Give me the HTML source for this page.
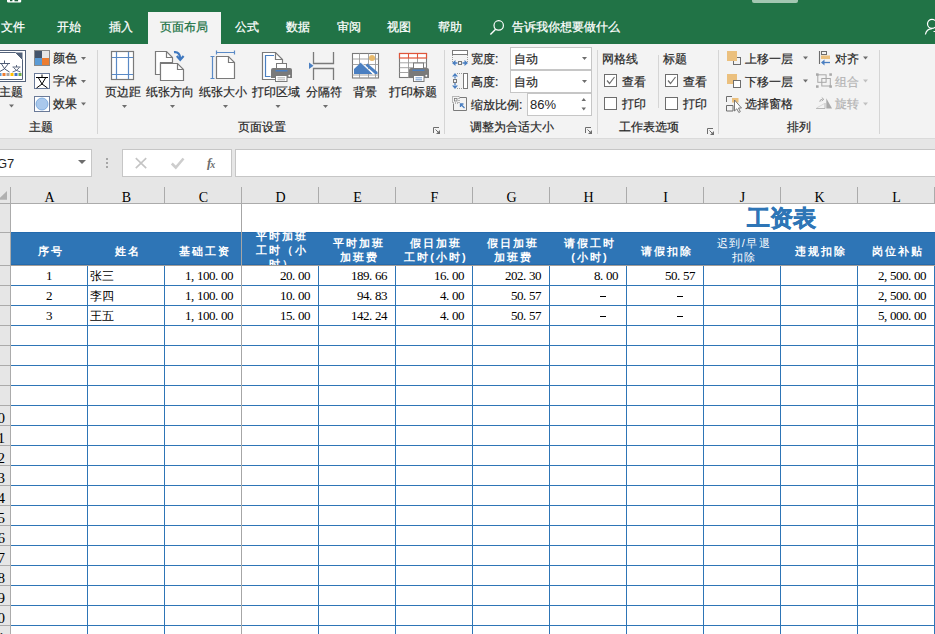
<!DOCTYPE html>
<html><head><meta charset="utf-8">
<style>
*{margin:0;padding:0;box-sizing:border-box}
html,body{width:935px;height:634px;overflow:hidden}
body{position:relative;background:#fff;font-family:"Liberation Sans",sans-serif;font-size:12px;color:#262626}
.a{position:absolute;white-space:nowrap}
.tab{color:#fff;top:20px;line-height:14px;font-size:12px;-webkit-text-stroke:0.25px}
.rb{color:#262626;font-size:12px;line-height:14px;-webkit-text-stroke:0.2px}
.sep{background:#d5d5d5;width:1px}
.dd{width:0;height:0;border-left:3px solid transparent;border-right:3px solid transparent;border-top:3px solid #595959}
.gl{color:#262626;font-size:12px;line-height:14px;-webkit-text-stroke:0.2px}
.ch{top:190px;font-family:"Liberation Serif",serif;font-size:14px;line-height:15px;color:#000;text-align:center;width:77px}
.num{font-family:"Liberation Serif",serif;font-size:13px;color:#000;line-height:20px;text-align:right;letter-spacing:-0.5px;top:0}
.num i{font-style:normal;display:inline-block;width:6px;text-align:left;letter-spacing:0}
.hd{color:#fff;font-weight:bold;font-size:11px;line-height:14px;text-align:center;letter-spacing:2px}
</style></head><body>

<div class="a" style="left:0;top:0;width:935px;height:44px;background:#217346"></div>
<svg class="a" style="left:6px;top:0" width="17" height="4" viewBox="0 0 17 4"><path d="M1 0 V1.5 Q1 2.6 2.2 2.6 H14 Q15.2 2.6 15.2 1.5 V0 Z" fill="#fff"/><rect x="4" y="0" width="2.4" height="1.2" fill="#1d5e3a"/><rect x="8.5" y="0" width="3.6" height="1.3" fill="#1d5e3a"/></svg>
<div class="a" style="left:752px;top:0;width:46px;height:3px;background:#a3c7b2;border-radius:0 0 2px 2px"></div>
<div class="a" style="left:148px;top:12px;width:73px;height:32px;background:#f3f3f3"></div>
<div class="a tab" style="left:1px">文件</div>
<div class="a tab" style="left:57px">开始</div>
<div class="a tab" style="left:109px">插入</div>
<div class="a tab" style="left:160px;color:#217346">页面布局</div>
<div class="a tab" style="left:235px">公式</div>
<div class="a tab" style="left:286px">数据</div>
<div class="a tab" style="left:337px">审阅</div>
<div class="a tab" style="left:387px">视图</div>
<div class="a tab" style="left:438px">帮助</div>
<div class="a tab" style="left:512px">告诉我你想要做什么</div>
<svg class="a" style="left:489px;top:19px" width="17" height="18" viewBox="0 0 17 18"><circle cx="9.7" cy="6.4" r="4.7" fill="none" stroke="#fff" stroke-width="1.2"/><line x1="6.6" y1="10.2" x2="1.4" y2="15.6" stroke="#fff" stroke-width="1.4"/></svg>
<svg class="a" style="left:923px;top:18px" width="14" height="18" viewBox="0 0 14 18"><circle cx="9" cy="5.8" r="4.5" fill="none" stroke="#fff" stroke-width="1.2"/><path d="M2.4 16.5 C3 13 5.5 10.8 9 10.6" fill="none" stroke="#fff" stroke-width="1.2"/><path d="M10.5 13.5 H14" stroke="#fff" stroke-width="1.1"/></svg>
<div class="a" style="left:0;top:44px;width:935px;height:94px;background:#f3f3f3"></div>
<div class="a" style="left:0;top:138px;width:935px;height:66px;background:#e6e6e6"></div>
<div class="a" style="left:0;top:138px;width:935px;height:1px;background:#dadada"></div>
<div class="a sep" style="left:97px;top:50px;height:84px"></div>
<div class="a sep" style="left:444px;top:50px;height:84px"></div>
<div class="a sep" style="left:597px;top:50px;height:84px"></div>
<div class="a sep" style="left:718px;top:50px;height:84px"></div>
<div class="a sep" style="left:879px;top:50px;height:84px"></div>
<div class="a sep" style="left:658px;top:55px;height:53px"></div>
<div class="a gl" style="left:29px;top:120px">主题</div>
<div class="a gl" style="left:238px;top:120px">页面设置</div>
<div class="a gl" style="left:470px;top:120px">调整为合适大小</div>
<div class="a gl" style="left:619px;top:120px">工作表选项</div>
<div class="a gl" style="left:787px;top:120px">排列</div>
<!-- dropdown boxes -->
<div class="a" style="left:510px;top:47px;width:82px;height:23px;background:#fff;border:1px solid #c6c6c6"></div>
<div class="a" style="left:510px;top:70px;width:82px;height:23px;background:#fff;border:1px solid #c6c6c6"></div>
<div class="a" style="left:527px;top:93px;width:65px;height:23px;background:#fff;border:1px solid #c6c6c6"></div>
<!-- ribbon icons svg overlay -->
<svg class="a" style="left:0;top:0" width="935" height="140" viewBox="0 0 935 140">
<!-- themes -->
<rect x="-5.5" y="50.5" width="31" height="31" fill="#fff" stroke="#53627a"/>
<path d="M-3.5 52.5 H15.5 L22.5 59.5 V79.5 H-3.5 Z" fill="#fff" stroke="#53627a"/>
<path d="M15.5 52.5 H22.5 V59.5 Z" fill="#53627a"/>
<path d="M-1 63.5 H10 M4.5 60.5 V63 M1.5 64 Q4 70 9.5 72 M8 64 Q5 70 -1 72" fill="none" stroke="#3b4a66" stroke-width="0.9"/>
<path d="M12.5 67 H20.5 M16.5 65 V67 M13.5 67.5 Q16 71 20.5 72 M19.5 67.5 Q17 71 12.5 72" fill="none" stroke="#3b4a66" stroke-width="0.8"/>
<rect x="-1" y="73" width="2.5" height="3" fill="#5b9bd5"/>
<rect x="2.5" y="73" width="3" height="3" fill="#ed7d31"/>
<rect x="6.5" y="73" width="3" height="3" fill="#a5a5a5"/>
<rect x="10.5" y="73" width="3" height="3" fill="#ffc000"/>
<rect x="14.5" y="73" width="3" height="3" fill="#4472c4"/>
<rect x="18.5" y="73" width="3" height="3" fill="#70ad47"/>
<!-- colors -->
<rect x="34.5" y="50.5" width="15" height="15" fill="#fff" stroke="#8a8a8a"/>
<rect x="35" y="51" width="7" height="7" fill="#44546a"/>
<rect x="42" y="51" width="7" height="7" fill="#e7e6e6"/>
<rect x="35" y="58" width="7" height="7" fill="#5b9bd5"/>
<rect x="42" y="58" width="7" height="7" fill="#ed7d31"/>
<!-- fonts -->
<rect x="34.5" y="73.5" width="15" height="15" fill="#fff" stroke="#6a7a98"/>
<path d="M36 77.5 H48 M42 74.5 V77 M38.5 78 Q41 85 47.5 88 M45.5 78 Q43 85 36.5 88" fill="none" stroke="#000" stroke-width="1"/>
<!-- effects -->
<rect x="34.5" y="96.5" width="15" height="15" fill="#fff" stroke="#6a7a98"/>
<circle cx="42" cy="104" r="6" fill="#a9c8ec" stroke="#6fa2da" stroke-width="0.8"/>

<!-- margins -->
<rect x="111.5" y="51.5" width="22" height="28" fill="#fff" stroke="#7a7a7a" stroke-width="1.2"/>
<path d="M116.5 52 V79 M128.5 52 V79 M112 57.5 H133 M112 74.5 H133" stroke="#5a8ac6" stroke-width="1.2"/>

<!-- orientation -->
<path d="M155.5 51.5 H166.5 L172.5 57.5 V62.5 H160.5 V74.5 H155.5 Z" fill="#fff" stroke="#7a7a7a" stroke-width="1.2"/>
<path d="M166.5 51.5 V57.5 H172.5" fill="none" stroke="#7a7a7a" stroke-width="1.2"/>
<path d="M160.5 63.5 H177.5 L183.5 69.5 V80.5 H160.5 Z" fill="#fff" stroke="#7a7a7a" stroke-width="1.2"/>
<path d="M177.5 63.5 V69.5 H183.5" fill="none" stroke="#7a7a7a" stroke-width="1.2"/>
<path d="M174 52.2 Q180 51.5 180.2 58.5" fill="none" stroke="#3f78bf" stroke-width="2.2"/>
<path d="M176.8 56 L180.2 59.8 L183.6 56" fill="none" stroke="#3f78bf" stroke-width="2.2"/>

<!-- size -->
<path d="M216.5 56.5 H228.5 L234.5 62.5 V78.5 H216.5 Z" fill="#fff" stroke="#7a7a7a" stroke-width="1.2"/>
<path d="M228.5 56.5 V62.5 H234.5" fill="none" stroke="#7a7a7a" stroke-width="1.2"/>
<path d="M216 52.5 H235 M216.5 50.5 V54.5 M234.5 50.5 V54.5" stroke="#5a8ac6" stroke-width="1.2" fill="none"/>
<path d="M212.5 56 V79 M210.5 56.5 H214.5 M210.5 78.5 H214.5" stroke="#5a8ac6" stroke-width="1.2" fill="none"/>

<!-- print area -->
<path d="M262.5 52.5 H275.5 L282.5 59.5 V79.5 H262.5 Z" fill="#fff" stroke="#7a7a7a" stroke-width="1.2"/>
<path d="M275.5 52.5 V59.5 H282.5" fill="none" stroke="#7a7a7a" stroke-width="1.2"/>
<path d="M274 55.5 H265.5 V76.5 H270.5" fill="none" stroke="#4a7fc1" stroke-width="1.2"/>
<rect x="276.5" y="63.5" width="10" height="6" fill="#fff" stroke="#7a7a7a"/>
<path d="M275 69.5 H288" stroke="#4a7fc1" stroke-width="1.2"/>
<path d="M271 78 V70 Q271 68 273 68 H290 Q292 68 292 70 V78 Z" fill="#7a7a7a"/>
<rect x="275.5" y="70" width="12" height="1.5" fill="#4a7fc1"/>
<circle cx="289.3" cy="75.8" r="1" fill="#fff"/>
<rect x="275.5" y="75.5" width="11.5" height="6" fill="#fff" stroke="#7a7a7a"/>
<path d="M277.5 77.8 H285 M277.5 79.8 H285" stroke="#9a9a9a" stroke-width="0.8"/>

<!-- breaks -->
<path d="M313.5 52 V63.5 H333.5 V52" fill="none" stroke="#7a7a7a" stroke-width="1.3"/>
<path d="M313.5 80 V68.5 H333.5 V80" fill="none" stroke="#7a7a7a" stroke-width="1.3"/>
<path d="M309 62.5 L313.5 65.8 L309 69 Z" fill="#4a7fc1"/>

<!-- background -->
<rect x="352.5" y="53.5" width="26" height="24.5" fill="#fff" stroke="#7a7a7a" stroke-width="1.1"/>
<path d="M352.5 59 H378.5 M352.5 64.5 H378.5 M352.5 75 H378.5 M359.5 53.5 V78 M368.5 53.5 V78 M375.5 53.5 V78" stroke="#9a9a9a" fill="none" stroke-width="0.9"/>
<path d="M354 74 V69 L361 62.5 L373 74 Z" fill="#4a7fc1"/>
<path d="M367.5 63.5 L377.5 72 V74 H375 L365.5 65.5 Z" fill="#4a7fc1"/>
<path d="M361 62.5 L373.5 74.5" stroke="#fff" stroke-width="1"/>
<circle cx="372" cy="58" r="3" fill="#e8b96a"/>

<!-- print titles -->
<rect x="399.5" y="53.5" width="27" height="24" fill="#fff" stroke="#7a7a7a" stroke-width="1.1"/>
<path d="M399.5 62.8 H426.5 M399.5 67.7 H426.5 M399.5 72.5 H426.5 M408.5 53.5 V77.5 M417.5 53.5 V77.5" stroke="#9a9a9a" fill="none" stroke-width="0.9"/>
<rect x="399.5" y="53.5" width="27" height="4.5" fill="#fff" stroke="#e0553a" stroke-width="1.2"/>
<path d="M408.5 53.5 V58 M417.5 53.5 V58" stroke="#e0553a" stroke-width="1.1"/>
<rect x="413.5" y="63" width="10" height="6" fill="#fff" stroke="#7a7a7a"/>
<path d="M409 78 V70 Q409 68 411 68 H427 Q429 68 429 70 V78 Z" fill="#7a7a7a"/>
<rect x="412.5" y="69.5" width="12" height="1.5" fill="#4a7fc1"/>
<circle cx="426.3" cy="75.8" r="1" fill="#fff"/>
<rect x="413.5" y="75.5" width="10.5" height="6" fill="#fff" stroke="#7a7a7a"/>
<path d="M415.5 77.8 H422 M415.5 79.8 H422" stroke="#4a7fc1" stroke-width="0.8"/>

<!-- launchers -->
<path d="M433.5 133 V127.5 H439" fill="none" stroke="#6d6d6d"/><path d="M435.5 129.5 L438.5 132.5" stroke="#6d6d6d" stroke-width="1"/><path d="M440 130 V134 H436 Z" fill="#6d6d6d"/>
<path d="M585.5 133 V127.5 H591" fill="none" stroke="#6d6d6d"/><path d="M587.5 129.5 L590.5 132.5" stroke="#6d6d6d" stroke-width="1"/><path d="M592 130 V134 H588 Z" fill="#6d6d6d"/>
<path d="M707.5 134 V128.5 H713" fill="none" stroke="#6d6d6d"/><path d="M709.5 130.5 L712.5 133.5" stroke="#6d6d6d" stroke-width="1"/><path d="M714 131 V135 H710 Z" fill="#6d6d6d"/>


<!-- scale icons -->
<rect x="452.5" y="50.5" width="15" height="4" fill="#fff" stroke="#7a7a7a"/>
<path d="M452.5 55 V62 M467.5 55 V62" stroke="#9a9a9a" stroke-dasharray="1 1"/>
<path d="M453 63 H457.5 M462.5 63 H467" stroke="#4a7fc1" stroke-width="1.3"/>
<path d="M452 63 L455.5 60 V66 Z M468 63 L464.5 60 V66 Z" fill="#4a7fc1"/>
<rect x="458.5" y="61.5" width="3" height="3" fill="none" stroke="#7a7a7a"/>

<path d="M455 77 V78.5 M455 83 V85" stroke="#4a7fc1" stroke-width="1.3"/>
<path d="M455 73 L452 76.5 H458 Z M455 89 L452 85.5 H458 Z" fill="#4a7fc1"/>
<path d="M457 73.5 H463 M457 88.5 H463" stroke="#9a9a9a" stroke-dasharray="1 1"/>
<rect x="453.5" y="79.5" width="3" height="3" fill="none" stroke="#7a7a7a"/>
<rect x="463.5" y="73.5" width="4" height="15" fill="#fff" stroke="#7a7a7a"/>

<path d="M459.5 97.5 H466.5 V110.5 H453.5 V104" fill="none" stroke="#7a7a7a"/>
<rect x="452.5" y="96.5" width="6.5" height="6.5" fill="#f3f3f3" stroke="#7a7a7a" stroke-dasharray="1 1"/>
<rect x="454.5" y="98.5" width="2.5" height="2.5" fill="none" stroke="#7a7a7a" stroke-width="0.8"/>
<path d="M464.5 108 L460.5 104 M460.5 107 V104 H463.5" fill="none" stroke="#4a7fc1" stroke-width="1.3"/>

<!-- checkboxes -->
<rect x="604.5" y="74.5" width="12" height="12" fill="#fff" stroke="#6d6d6d"/>
<path d="M607 80.5 L609.5 83.5 L614.5 77" fill="none" stroke="#6d6d6d" stroke-width="1.2"/>
<rect x="604.5" y="97.5" width="12" height="12" fill="#fff" stroke="#6d6d6d"/>
<rect x="665.5" y="74.5" width="12" height="12" fill="#fff" stroke="#6d6d6d"/>
<path d="M668 80.5 L670.5 83.5 L675.5 77" fill="none" stroke="#6d6d6d" stroke-width="1.2"/>
<rect x="665.5" y="97.5" width="12" height="12" fill="#fff" stroke="#6d6d6d"/>

<!-- arrange icons -->
<rect x="733.5" y="57.5" width="7" height="7" fill="none" stroke="#6d6d6d"/>
<rect x="727" y="51" width="10" height="10" fill="#ebc07e"/>
<rect x="727" y="74" width="10" height="10" fill="#ebc07e"/>
<rect x="733.5" y="80.5" width="7" height="7" fill="#fff" stroke="#6d6d6d"/>
<path d="M726.5 102 V96.5 H732 M726.5 105.5 V111 H733 V105.5 H726.5" fill="none" stroke="#6d6d6d"/>
<rect x="732" y="98" width="6.5" height="4.5" fill="#ebc07e"/>
<path d="M734.5 100 V111 L736.8 108.8 L738.8 112.5 L740.3 111.7 L738.5 108 H741.5 Z" fill="#fff" stroke="#6d6d6d" stroke-width="0.9"/>

<path d="M819.5 51 V64" stroke="#6d6d6d" stroke-width="1.1"/>
<rect x="821.5" y="51.5" width="5" height="3" fill="none" stroke="#6d6d6d"/>
<rect x="821" y="55.5" width="9" height="3.5" fill="#ebc07e"/>
<path d="M830 62.5 H823.5" stroke="#4a7fc1" stroke-width="1.3"/>
<path d="M821 62.5 L824.5 59.5 V65.5 Z" fill="#4a7fc1"/>

<g fill="#a8a8a8">
<rect x="816" y="73.3" width="2.6" height="2.5"/><rect x="829.3" y="73.3" width="2.6" height="2.5"/>
<rect x="816" y="85.3" width="2.6" height="2.5"/><rect x="829.3" y="85.3" width="2.6" height="2.5"/>
</g>
<rect x="817.8" y="74.8" width="8.3" height="7.5" fill="none" stroke="#a8a8a8" stroke-width="1"/>
<rect x="821.8" y="78.5" width="8.5" height="7.5" fill="none" stroke="#a8a8a8" stroke-width="1"/>

<path d="M826.3 98.2 L832 108.6 H826.3 Z" fill="#a8a8a8"/>
<path d="M816 108.5 H825 V103" fill="none" stroke="#b8b8b8" stroke-width="1"/>
<path d="M816.5 108 L824.5 103.5" fill="none" stroke="#d0d0d0" stroke-width="0.8"/>
<path d="M819.8 101.8 Q819.8 99.3 822.5 99.3" fill="none" stroke="#a8a8a8" stroke-width="1"/>
<path d="M821.8 97.6 L823.8 99.3 L821.8 101" fill="none" stroke="#a8a8a8" stroke-width="1"/>

<!-- dropdown arrows -->
<g fill="#6d6d6d">
<path d="M9 104.5 H14 L11.5 107.5 Z"/>
<path d="M81 57 H86 L83.5 60 Z"/>
<path d="M81 80 H86 L83.5 83 Z"/>
<path d="M81 102.5 H86 L83.5 105.5 Z"/>
<path d="M122 105 H127 L124.5 108 Z"/>
<path d="M170 105 H175 L172.5 108 Z"/>
<path d="M223 105 H228 L225.5 108 Z"/>
<path d="M275.5 105 H280.5 L278 108 Z"/>
<path d="M323 105 H328 L325.5 108 Z"/>
<path d="M582 57 H587 L584.5 60 Z"/>
<path d="M582 80 H587 L584.5 83 Z"/>
<path d="M581.5 101 H586 L583.75 98 Z"/>
<path d="M581.5 107.5 H586 L583.75 110.5 Z"/>
<path d="M803 56.5 H808 L805.5 59.5 Z"/>
<path d="M803 79.5 H808 L805.5 82.5 Z"/>
<path d="M863 56.5 H868 L865.5 59.5 Z"/>
</g>
<g fill="#c0c0c0">
<path d="M863 79.5 H868 L865.5 82.5 Z"/>
<path d="M863 102.5 H868 L865.5 105.5 Z"/>
</g>
</svg>

<!-- ribbon text -->
<div class="a rb" style="left:-1px;top:85px">主题</div>
<div class="a rb" style="left:53px;top:51px">颜色</div>
<div class="a rb" style="left:53px;top:74px">字体</div>
<div class="a rb" style="left:53px;top:97px">效果</div>
<div class="a rb" style="left:105px;top:85px">页边距</div>
<div class="a rb" style="left:146px;top:85px">纸张方向</div>
<div class="a rb" style="left:199px;top:85px">纸张大小</div>
<div class="a rb" style="left:252px;top:85px">打印区域</div>
<div class="a rb" style="left:306px;top:85px">分隔符</div>
<div class="a rb" style="left:353px;top:85px">背景</div>
<div class="a rb" style="left:389px;top:85px">打印标题</div>
<div class="a rb" style="left:471px;top:52px">宽度:</div>
<div class="a rb" style="left:471px;top:75px">高度:</div>
<div class="a rb" style="left:471px;top:98px">缩放比例:</div>
<div class="a rb" style="left:514px;top:52px">自动</div>
<div class="a rb" style="left:514px;top:75px">自动</div>
<div class="a rb" style="left:530px;top:98px;font-size:13px;-webkit-text-stroke:0">86%</div>
<div class="a rb" style="left:602px;top:52px">网格线</div>
<div class="a rb" style="left:663px;top:52px">标题</div>
<div class="a rb" style="left:622px;top:75px">查看</div>
<div class="a rb" style="left:622px;top:97px">打印</div>
<div class="a rb" style="left:683px;top:75px">查看</div>
<div class="a rb" style="left:683px;top:97px">打印</div>
<div class="a rb" style="left:745px;top:52px">上移一层</div>
<div class="a rb" style="left:745px;top:75px">下移一层</div>
<div class="a rb" style="left:745px;top:97px">选择窗格</div>
<div class="a rb" style="left:835px;top:52px">对齐</div>
<div class="a rb" style="left:835px;top:75px;color:#b4b4b4">组合</div>
<div class="a rb" style="left:835px;top:97px;color:#b4b4b4">旋转</div>

<div class="a" style="left:-1px;top:149px;width:93px;height:28px;background:#fff;border:1px solid #c6c6c6"></div>
<div class="a" style="left:-3px;top:156px;font-size:13px;line-height:15px;color:#262626">G7</div>
<div class="a dd" style="left:78px;top:160px;border-left-width:4px;border-right-width:4px;border-top-width:4px;border-top-color:#6d6d6d"></div>
<div class="a" style="left:106px;top:158px;width:2px;height:2px;background:#a6a6a6"></div>
<div class="a" style="left:106px;top:162px;width:2px;height:2px;background:#a6a6a6"></div>
<div class="a" style="left:106px;top:166px;width:2px;height:2px;background:#a6a6a6"></div>
<div class="a" style="left:122px;top:149px;width:110px;height:28px;background:#fff;border:1px solid #c6c6c6"></div>
<svg class="a" style="left:134px;top:156px" width="14" height="14" viewBox="0 0 14 14"><path d="M1.8 2.2 L12.2 12.2 M12.2 2.2 L1.8 12.2" stroke="#c4c4c4" stroke-width="1.6"/></svg>
<svg class="a" style="left:170px;top:156px" width="15" height="14" viewBox="0 0 15 14"><path d="M1.8 7.5 L5.8 11.5 L13.5 2.5" fill="none" stroke="#cdcdcd" stroke-width="2.6"/></svg>
<div class="a" style="left:207px;top:155px;font-family:'Liberation Serif',serif;font-style:italic;font-weight:bold;font-size:13px;line-height:16px;color:#6d6d6d">f<span style="font-size:10px;margin-left:-1px;position:relative;top:1px">x</span></div>
<div class="a" style="left:235px;top:149px;width:702px;height:28px;background:#fff;border:1px solid #c6c6c6"></div>
<div class="a" style="left:0;top:204px;width:10px;height:430px;background:#e6e6e6"></div>
<div class="a" style="left:0;top:203px;width:935px;height:1px;background:#ababab"></div>
<div class="a" style="left:10px;top:187px;width:1px;height:447px;background:#ababab"></div>
<svg class="a" style="left:0;top:189px" width="9" height="13" viewBox="0 0 9 13"><path d="M7 2 L7 10.8 L-2 10.8 Z" fill="#b0b0b0"/></svg>
<div class="a ch" style="left:11px">A</div>
<div class="a" style="left:87px;top:187px;width:1px;height:16px;background:#ababab"></div>
<div class="a ch" style="left:88px">B</div>
<div class="a" style="left:164px;top:187px;width:1px;height:16px;background:#ababab"></div>
<div class="a ch" style="left:165px">C</div>
<div class="a" style="left:241px;top:187px;width:1px;height:16px;background:#ababab"></div>
<div class="a ch" style="left:242px">D</div>
<div class="a" style="left:318px;top:187px;width:1px;height:16px;background:#ababab"></div>
<div class="a ch" style="left:319px">E</div>
<div class="a" style="left:395px;top:187px;width:1px;height:16px;background:#ababab"></div>
<div class="a ch" style="left:396px">F</div>
<div class="a" style="left:472px;top:187px;width:1px;height:16px;background:#ababab"></div>
<div class="a ch" style="left:473px">G</div>
<div class="a" style="left:549px;top:187px;width:1px;height:16px;background:#ababab"></div>
<div class="a ch" style="left:550px">H</div>
<div class="a" style="left:626px;top:187px;width:1px;height:16px;background:#ababab"></div>
<div class="a ch" style="left:627px">I</div>
<div class="a" style="left:703px;top:187px;width:1px;height:16px;background:#ababab"></div>
<div class="a ch" style="left:704px">J</div>
<div class="a" style="left:780px;top:187px;width:1px;height:16px;background:#ababab"></div>
<div class="a ch" style="left:781px">K</div>
<div class="a" style="left:857px;top:187px;width:1px;height:16px;background:#ababab"></div>
<div class="a ch" style="left:858px">L</div>
<div class="a" style="left:934px;top:187px;width:1px;height:16px;background:#ababab"></div>
<div class="a" style="left:0;top:232px;width:10px;height:1px;background:#ababab"></div>
<div class="a" style="left:0;top:265px;width:10px;height:1px;background:#ababab"></div>
<div class="a" style="left:0;top:285px;width:10px;height:1px;background:#ababab"></div>
<div class="a" style="left:0;top:305px;width:10px;height:1px;background:#ababab"></div>
<div class="a" style="left:0;top:325px;width:10px;height:1px;background:#ababab"></div>
<div class="a" style="left:0;top:345px;width:10px;height:1px;background:#ababab"></div>
<div class="a" style="left:0;top:365px;width:10px;height:1px;background:#ababab"></div>
<div class="a" style="left:0;top:385px;width:10px;height:1px;background:#ababab"></div>
<div class="a" style="left:0;top:405px;width:10px;height:1px;background:#ababab"></div>
<div class="a" style="left:0;top:425px;width:10px;height:1px;background:#ababab"></div>
<div class="a" style="left:0;top:445px;width:10px;height:1px;background:#ababab"></div>
<div class="a" style="left:0;top:465px;width:10px;height:1px;background:#ababab"></div>
<div class="a" style="left:0;top:485px;width:10px;height:1px;background:#ababab"></div>
<div class="a" style="left:0;top:505px;width:10px;height:1px;background:#ababab"></div>
<div class="a" style="left:0;top:525px;width:10px;height:1px;background:#ababab"></div>
<div class="a" style="left:0;top:545px;width:10px;height:1px;background:#ababab"></div>
<div class="a" style="left:0;top:565px;width:10px;height:1px;background:#ababab"></div>
<div class="a" style="left:0;top:585px;width:10px;height:1px;background:#ababab"></div>
<div class="a" style="left:0;top:605px;width:10px;height:1px;background:#ababab"></div>
<div class="a" style="left:0;top:625px;width:10px;height:1px;background:#ababab"></div>
<div class="a" style="left:11px;top:232px;width:924px;height:33px;background:#2e75b6"></div>
<div class="a" style="left:11px;top:232px;width:924px;height:1px;background:#236aad"></div>
<div class="a" style="left:11px;top:264px;width:924px;height:1px;background:#236aad"></div>
<div class="a" style="left:11px;top:265px;width:924px;height:1px;background:#a39e99"></div>
<div class="a" style="left:11px;top:285px;width:924px;height:1px;background:#2e75b6"></div>
<div class="a" style="left:11px;top:305px;width:924px;height:1px;background:#2e75b6"></div>
<div class="a" style="left:11px;top:325px;width:924px;height:1px;background:#2e75b6"></div>
<div class="a" style="left:11px;top:345px;width:924px;height:1px;background:#2e75b6"></div>
<div class="a" style="left:11px;top:365px;width:924px;height:1px;background:#2e75b6"></div>
<div class="a" style="left:11px;top:385px;width:924px;height:1px;background:#2e75b6"></div>
<div class="a" style="left:11px;top:405px;width:924px;height:1px;background:#2e75b6"></div>
<div class="a" style="left:11px;top:425px;width:924px;height:1px;background:#2e75b6"></div>
<div class="a" style="left:11px;top:445px;width:924px;height:1px;background:#2e75b6"></div>
<div class="a" style="left:11px;top:465px;width:924px;height:1px;background:#2e75b6"></div>
<div class="a" style="left:11px;top:485px;width:924px;height:1px;background:#2e75b6"></div>
<div class="a" style="left:11px;top:505px;width:924px;height:1px;background:#2e75b6"></div>
<div class="a" style="left:11px;top:525px;width:924px;height:1px;background:#2e75b6"></div>
<div class="a" style="left:11px;top:545px;width:924px;height:1px;background:#2e75b6"></div>
<div class="a" style="left:11px;top:565px;width:924px;height:1px;background:#2e75b6"></div>
<div class="a" style="left:11px;top:585px;width:924px;height:1px;background:#2e75b6"></div>
<div class="a" style="left:11px;top:605px;width:924px;height:1px;background:#2e75b6"></div>
<div class="a" style="left:11px;top:625px;width:924px;height:1px;background:#2e75b6"></div>
<div class="a" style="left:87px;top:266px;width:1px;height:368px;background:#2e75b6"></div>
<div class="a" style="left:164px;top:266px;width:1px;height:368px;background:#2e75b6"></div>
<div class="a" style="left:241px;top:204px;width:1px;height:430px;background:#a6a6a6"></div>
<div class="a" style="left:318px;top:266px;width:1px;height:368px;background:#2e75b6"></div>
<div class="a" style="left:395px;top:266px;width:1px;height:368px;background:#2e75b6"></div>
<div class="a" style="left:472px;top:266px;width:1px;height:368px;background:#2e75b6"></div>
<div class="a" style="left:549px;top:266px;width:1px;height:368px;background:#2e75b6"></div>
<div class="a" style="left:626px;top:266px;width:1px;height:368px;background:#2e75b6"></div>
<div class="a" style="left:703px;top:266px;width:1px;height:368px;background:#2e75b6"></div>
<div class="a" style="left:780px;top:266px;width:1px;height:368px;background:#2e75b6"></div>
<div class="a" style="left:857px;top:266px;width:1px;height:368px;background:#2e75b6"></div>
<div class="a" style="left:934px;top:266px;width:1px;height:368px;background:#2e75b6"></div>
<div class="a" style="left:-25px;width:30px;text-align:right;top:408px;font-family:'Liberation Serif',serif;font-size:15px;line-height:20px;color:#000">10</div>
<div class="a" style="left:-25px;width:30px;text-align:right;top:428px;font-family:'Liberation Serif',serif;font-size:15px;line-height:20px;color:#000">11</div>
<div class="a" style="left:-25px;width:30px;text-align:right;top:448px;font-family:'Liberation Serif',serif;font-size:15px;line-height:20px;color:#000">12</div>
<div class="a" style="left:-25px;width:30px;text-align:right;top:468px;font-family:'Liberation Serif',serif;font-size:15px;line-height:20px;color:#000">13</div>
<div class="a" style="left:-25px;width:30px;text-align:right;top:488px;font-family:'Liberation Serif',serif;font-size:15px;line-height:20px;color:#000">14</div>
<div class="a" style="left:-25px;width:30px;text-align:right;top:508px;font-family:'Liberation Serif',serif;font-size:15px;line-height:20px;color:#000">15</div>
<div class="a" style="left:-25px;width:30px;text-align:right;top:528px;font-family:'Liberation Serif',serif;font-size:15px;line-height:20px;color:#000">16</div>
<div class="a" style="left:-25px;width:30px;text-align:right;top:548px;font-family:'Liberation Serif',serif;font-size:15px;line-height:20px;color:#000">17</div>
<div class="a" style="left:-25px;width:30px;text-align:right;top:568px;font-family:'Liberation Serif',serif;font-size:15px;line-height:20px;color:#000">18</div>
<div class="a" style="left:-25px;width:30px;text-align:right;top:588px;font-family:'Liberation Serif',serif;font-size:15px;line-height:20px;color:#000">19</div>
<div class="a" style="left:-25px;width:30px;text-align:right;top:608px;font-family:'Liberation Serif',serif;font-size:15px;line-height:20px;color:#000">20</div>
<div class="a" style="left:-25px;width:30px;text-align:right;top:628px;font-family:'Liberation Serif',serif;font-size:15px;line-height:20px;color:#000">21</div>
<div class="a" style="left:731px;top:203px;width:100px;text-align:center;font-size:23px;line-height:30px;font-weight:bold;-webkit-text-stroke:0.6px;color:#2e75b6">工资表</div>
<div class="a hd" style="left:13px;top:244px;width:76px">序号</div>
<div class="a hd" style="left:90px;top:244px;width:76px">姓名</div>
<div class="a hd" style="left:167px;top:244px;width:76px">基础工资</div>
<div class="a hd" style="left:321px;top:236px;width:76px">平时加班<br>加班费</div>
<div class="a hd" style="left:398px;top:236px;width:76px">假日加班<br>工时(小时)</div>
<div class="a hd" style="left:475px;top:236px;width:76px">假日加班<br>加班费</div>
<div class="a hd" style="left:552px;top:236px;width:76px">请假工时<br>(小时)</div>
<div class="a hd" style="left:629px;top:244px;width:76px">请假扣除</div>
<div class="a hd" style="left:783px;top:244px;width:76px">违规扣除</div>
<div class="a hd" style="left:860px;top:244px;width:76px">岗位补贴</div>
<div class="a" style="left:242px;top:232px;width:76px;height:33px;overflow:hidden"><div class="hd" style="position:absolute;left:2px;top:-3px;width:76px">平时加班<br>工时（小<br>时）</div></div>
<div class="a" style="left:706px;top:236px;width:76px;text-align:center;color:#fff;font-size:11px;line-height:14px;letter-spacing:1.5px">迟到/早退<br>扣除</div>
<div class="a num" style="left:11px;top:266px;width:76px;text-align:center">1</div>
<div class="a" style="left:90px;top:266px;line-height:20px;font-size:12px;color:#000">张三</div>
<div class="a num" style="left:164px;top:266px;width:69px">1<i>,</i>100<i>.</i>00</div>
<div class="a num" style="left:241px;top:266px;width:69px">20<i>.</i>00</div>
<div class="a num" style="left:318px;top:266px;width:69px">189<i>.</i>66</div>
<div class="a num" style="left:395px;top:266px;width:69px">16<i>.</i>00</div>
<div class="a num" style="left:472px;top:266px;width:69px">202<i>.</i>30</div>
<div class="a num" style="left:549px;top:266px;width:69px">8<i>.</i>00</div>
<div class="a num" style="left:626px;top:266px;width:69px">50<i>.</i>57</div>
<div class="a num" style="left:857px;top:266px;width:69px">2<i>,</i>500<i>.</i>00</div>
<div class="a num" style="left:11px;top:286px;width:76px;text-align:center">2</div>
<div class="a" style="left:90px;top:286px;line-height:20px;font-size:12px;color:#000">李四</div>
<div class="a num" style="left:164px;top:286px;width:69px">1<i>,</i>100<i>.</i>00</div>
<div class="a num" style="left:241px;top:286px;width:69px">10<i>.</i>00</div>
<div class="a num" style="left:318px;top:286px;width:69px">94<i>.</i>83</div>
<div class="a num" style="left:395px;top:286px;width:69px">4<i>.</i>00</div>
<div class="a num" style="left:472px;top:286px;width:69px">50<i>.</i>57</div>
<div class="a" style="left:600px;top:296px;width:6px;height:1px;background:#000"></div>
<div class="a" style="left:677px;top:296px;width:6px;height:1px;background:#000"></div>
<div class="a num" style="left:857px;top:286px;width:69px">2<i>,</i>500<i>.</i>00</div>
<div class="a num" style="left:11px;top:306px;width:76px;text-align:center">3</div>
<div class="a" style="left:90px;top:306px;line-height:20px;font-size:12px;color:#000">王五</div>
<div class="a num" style="left:164px;top:306px;width:69px">1<i>,</i>100<i>.</i>00</div>
<div class="a num" style="left:241px;top:306px;width:69px">15<i>.</i>00</div>
<div class="a num" style="left:318px;top:306px;width:69px">142<i>.</i>24</div>
<div class="a num" style="left:395px;top:306px;width:69px">4<i>.</i>00</div>
<div class="a num" style="left:472px;top:306px;width:69px">50<i>.</i>57</div>
<div class="a" style="left:600px;top:316px;width:6px;height:1px;background:#000"></div>
<div class="a" style="left:677px;top:316px;width:6px;height:1px;background:#000"></div>
<div class="a num" style="left:857px;top:306px;width:69px">5<i>,</i>000<i>.</i>00</div>
</body></html>
